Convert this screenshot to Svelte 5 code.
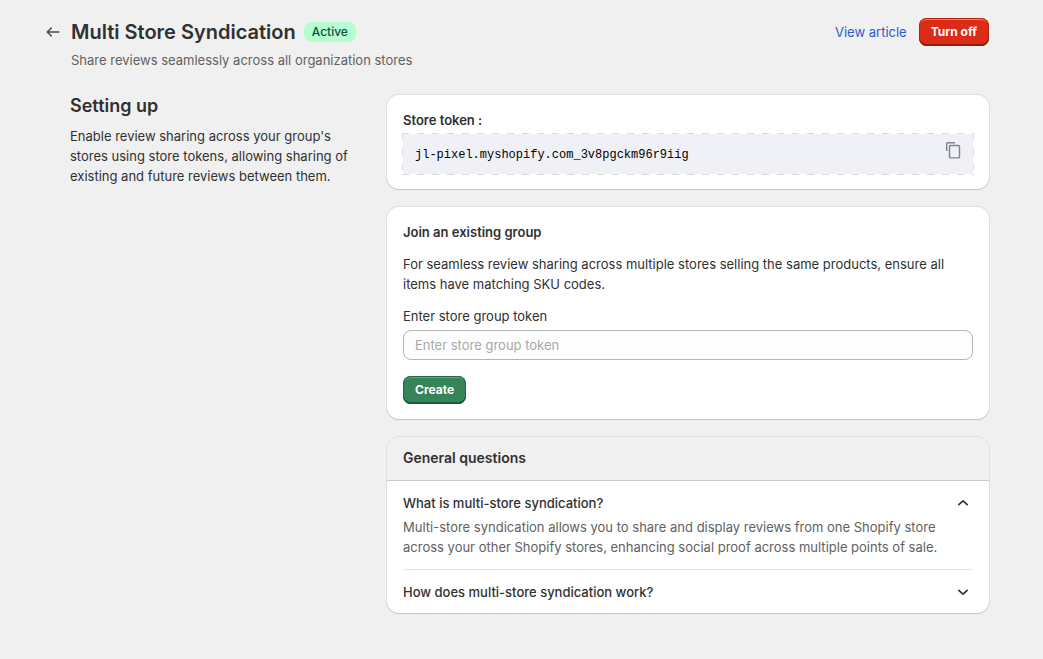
<script>
  let groupToken = $state('');
  let faqs = $state([
    {
      question: 'What is multi-store syndication?',
      answer:
        'Multi-store syndication allows you to share and display reviews from one Shopify store across your other Shopify stores, enhancing social proof across multiple points of sale.',
      open: true
    },
    {
      question: 'How does multi-store syndication work?',
      answer: 'Share your store token with the other stores in your group to sync reviews between them.',
      open: false
    }
  ]);
  const storeToken = 'jl-pixel.myshopify.com_3v8pgckm96r9iig';

  function copyToken() {
    navigator.clipboard?.writeText(storeToken);
  }
</script>

<main class="page">
  <header class="header">
    <button class="icon-button back" type="button" aria-label="Back">
      <svg viewBox="0 0 20 20" width="20" height="20" fill="#4a4a4a">
        <path fill-rule="evenodd" d="M16.5 10a.75.75 0 0 1-.75.75h-9.69l2.72 2.72a.75.75 0 0 1-1.06 1.06l-4-4a.75.75 0 0 1 0-1.06l4-4a.75.75 0 1 1 1.06 1.06l-2.72 2.72h9.69a.75.75 0 0 1 .75.75Z" />
      </svg>
    </button>
    <div class="heading">
      <div class="title-row">
        <h1>Multi Store Syndication</h1>
        <span class="badge">Active</span>
      </div>
      <p class="subtitle">Share reviews seamlessly across all organization stores</p>
    </div>
    <div class="actions">
      <a href="#article">View article</a>
      <button class="button critical" type="button">Turn off</button>
    </div>
  </header>

  <div class="layout">
    <section class="intro">
      <h2>Setting up</h2>
      <p>
        Enable review sharing across your group's stores using store tokens, allowing sharing of
        existing and future reviews between them.
      </p>
    </section>

    <div class="cards">
      <section class="card">
        <h3>Store token :</h3>
        <div class="token">
          <code>{storeToken}</code>
          <button class="icon-button" type="button" aria-label="Copy token" onclick={copyToken}>
            <svg viewBox="0 0 20 20" width="20" height="20" fill="none" stroke="#7b858c" stroke-width="1.4">
              <path d="M3.7 11V3.5q0-.8.8-.8H12" />
              <rect x="6.5" y="5.5" width="10" height="12.4" rx="1" />
            </svg>
          </button>
        </div>
      </section>

      <form class="card" onsubmit={(event) => event.preventDefault()}>
        <h3>Join an existing group</h3>
        <p class="description">
          For seamless review sharing across multiple stores selling the same products, ensure all
          items have matching SKU codes.
        </p>
        <label for="group-token">Enter store group token</label>
        <input id="group-token" type="text" placeholder="Enter store group token" bind:value={groupToken} />
        <button class="button success" type="submit">Create</button>
      </form>

      <section class="card faq">
        <h2 class="faq-title">General questions</h2>
        <div class="faq-list">
          {#each faqs as faq}
            <div class="faq-item">
              <button class="question" type="button" aria-expanded={faq.open} onclick={() => (faq.open = !faq.open)}>
                <span>{faq.question}</span>
                <svg class:open={faq.open} viewBox="0 0 20 20" width="20" height="20" fill="none" stroke="#303030" stroke-width="1.6" stroke-linecap="round" stroke-linejoin="round">
                  <path d="m5.8 8.3 4.2 3.9 4.2-3.9" />
                </svg>
              </button>
              {#if faq.open}
                <p class="answer">{faq.answer}</p>
              {/if}
            </div>
          {/each}
        </div>
      </section>
    </div>
  </div>
</main>

<style>
  :global(body) {
    background: #f0f0f0;
  }

  .page {
    box-sizing: border-box;
    max-width: 1044px;
    margin: 0 auto;
    padding: 18px 54px 44px 43px;
    color: #303030;
    font: 420 13px/20px Inter, sans-serif;
  }

  h1,
  h2,
  h3,
  p {
    margin: 0;
  }

  button {
    font: inherit;
    cursor: pointer;
  }

  svg {
    display: block;
  }

  .header {
    display: flex;
    align-items: flex-start;
    gap: 8px;
  }

  .icon-button {
    padding: 0;
    border: 0;
    background: none;
  }

  .back {
    padding: 4px 0;
  }

  .heading {
    flex: 1;
  }

  .title-row {
    display: flex;
    align-items: center;
    gap: 8px;
  }

  h1 {
    font-size: 20px;
    font-weight: 600;
    line-height: 28px;
  }

  .badge {
    padding: 0 8px;
    border-radius: 8px;
    background: #b4fed2;
    color: #0c5132;
    font-size: 12px;
    font-weight: 500;
  }

  .subtitle {
    margin-top: 4px;
    color: #616161;
  }

  .actions {
    display: flex;
    align-items: center;
    gap: 12px;
  }

  a {
    color: #2a5bd7;
    text-decoration: none;
  }

  a:hover {
    text-decoration: underline;
  }

  .button {
    height: 28px;
    padding: 0 12px;
    border: 0;
    border-radius: 8px;
    color: #fff;
    font-size: 12px;
    font-weight: 650;
  }

  .critical {
    background: #dc2b17;
    box-shadow:
      inset 0 -2px #8e1f0b,
      inset 0 0 0 1px #b5260b,
      inset 0 2px #ee7a6b;
  }

  .success {
    background: #36845a;
    box-shadow:
      inset 0 -2px #1c5a39,
      inset 0 0 0 1px #256a45,
      inset 0 2px #66a583;
  }

  .layout {
    display: grid;
    grid-template-columns: 1fr 2fr;
    gap: 16px;
    margin-top: 24px;
    padding-left: 27px;
  }

  .intro h2 {
    margin-bottom: 8px;
    font-size: 18px;
    font-weight: 600;
    line-height: 24px;
  }

  .cards {
    display: grid;
    gap: 18px;
    align-content: start;
    margin-top: 1px;
  }

  .card {
    padding: 15px 16px;
    border-radius: 12px;
    background: #fff;
    box-shadow:
      0 1px 1px #1a1a1a26,
      0 0 0 1px #0000000f;
  }

  h3 {
    font-size: 13px;
    font-weight: 600;
  }

  .token {
    --dash: #d9dcd9 0 7px, #fff 7px 15px;
    display: flex;
    align-items: flex-start;
    justify-content: space-between;
    gap: 12px;
    margin: 3px -1px -1px;
    padding: 7px 11px 7px 13px;
    background:
      repeating-linear-gradient(90deg, var(--dash)) top / 100% 1px no-repeat,
      repeating-linear-gradient(90deg, var(--dash)) bottom / 100% 1px no-repeat,
      repeating-linear-gradient(var(--dash)) left / 1px 100% no-repeat,
      repeating-linear-gradient(var(--dash)) right / 1px 100% no-repeat,
      #f0f1f6;
  }

  code {
    padding: 4px 0 2px;
    overflow-wrap: anywhere;
    color: #000;
    font: 12px/22px "Liberation Mono", monospace;
  }

  .description {
    margin: 12px 0;
  }

  label {
    display: block;
  }

  input {
    box-sizing: border-box;
    display: block;
    width: 100%;
    height: 30px;
    margin: 4px 0 16px;
    padding: 0 11px;
    border: 1px solid #b5b5b5;
    border-radius: 8px;
    background: #fdfdfd;
    color: #303030;
    font: inherit;
  }

  input::placeholder {
    color: #a8a8a8;
  }

  .faq {
    padding: 0;
    overflow: hidden;
  }

  .faq-title {
    padding: 11px 16px 12px;
    border-bottom: 1px solid #c9c9c9;
    background: #f0f0f0;
    font-size: 14px;
    font-weight: 600;
    line-height: 20px;
  }

  .faq-list {
    padding: 0 16px;
  }

  .faq-item {
    padding: 12px 0;
  }

  .faq-item:last-child {
    padding-bottom: 11px;
  }

  .faq-item + .faq-item {
    border-top: 1px solid #e3e3e3;
  }

  .question {
    display: flex;
    justify-content: space-between;
    width: 100%;
    padding: 0;
    border: 0;
    background: none;
    color: inherit;
    font-weight: 550;
    text-align: left;
  }

  .open {
    transform: rotate(180deg);
  }

  .answer {
    margin-top: 4px;
    color: #616161;
  }
</style>
